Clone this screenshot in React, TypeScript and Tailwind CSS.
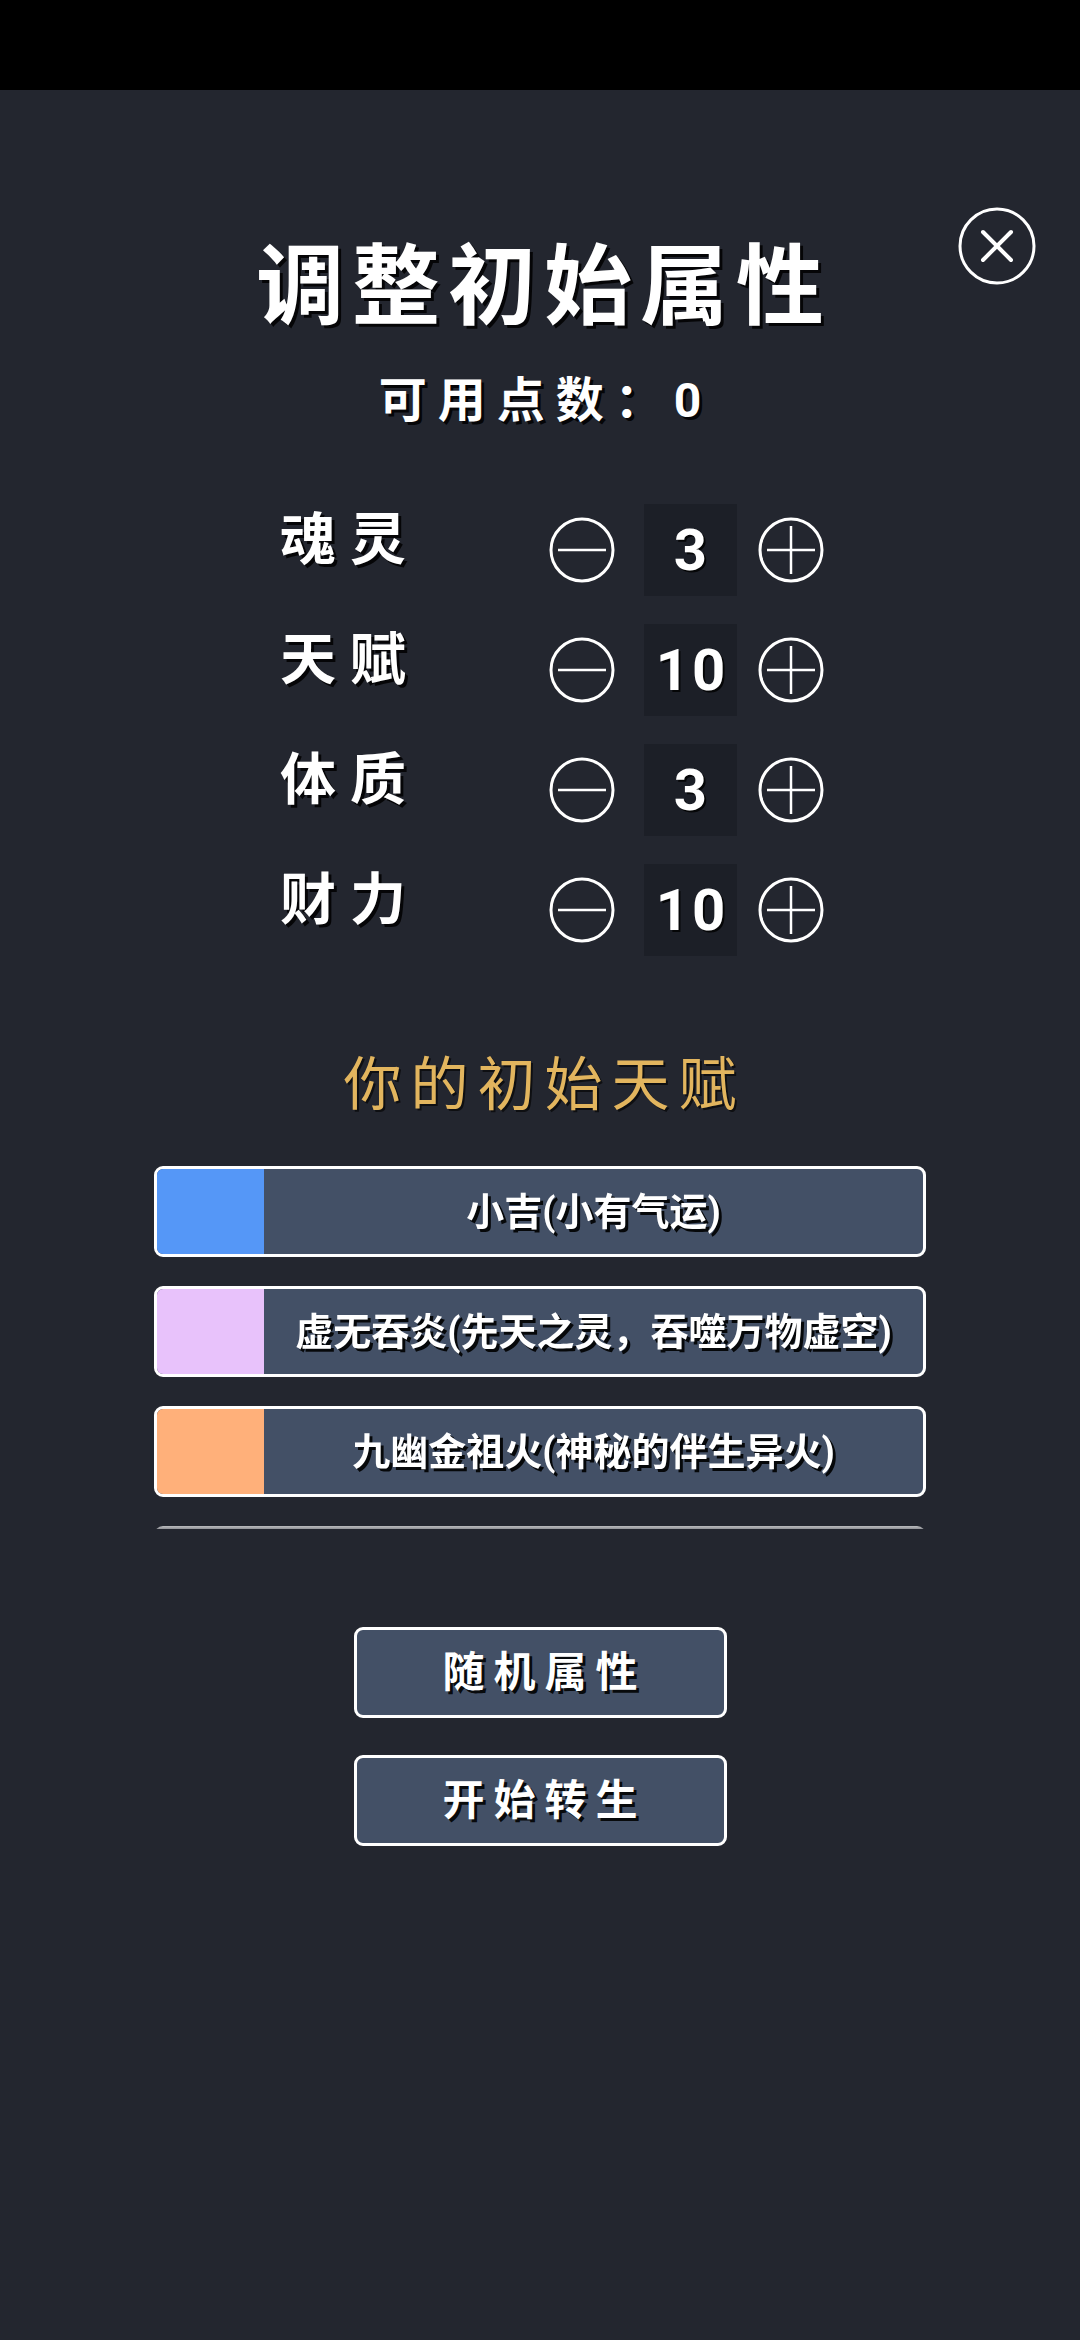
import React from "react";

const FONT = 'Roboto, "Noto Sans CJK SC", "Noto Sans", sans-serif';

function MinusIcon() {
  return (
    <svg width="66" height="66" viewBox="0 0 66 66" fill="none">
      <circle cx="33" cy="33" r="31" stroke="white" strokeWidth="3" />
      <line x1="9" y1="33" x2="57" y2="33" stroke="white" strokeWidth="2.5" />
    </svg>
  );
}

function PlusIcon() {
  return (
    <svg width="66" height="66" viewBox="0 0 66 66" fill="none">
      <circle cx="33" cy="33" r="31" stroke="white" strokeWidth="3" />
      <line x1="9" y1="33" x2="57" y2="33" stroke="white" strokeWidth="2.5" />
      <line x1="33" y1="9" x2="33" y2="57" stroke="white" strokeWidth="2.5" />
    </svg>
  );
}

const attrs = [
  { name: "魂灵", value: 3 },
  { name: "天赋", value: 10 },
  { name: "体质", value: 3 },
  { name: "财力", value: 10 },
];

const talents = [
  { color: "#5597f7", text: "小吉(小有气运)" },
  { color: "#e8c2fb", text: "虚无吞炎(先天之灵，吞噬万物虚空)" },
  { color: "#ffb07a", text: "九幽金祖火(神秘的伴生异火)" },
  { color: "#c9c9d9", text: "" },
];

export default function App() {
  return (
    <div
      className="w-[1080px] h-[2340px] bg-[#23262f] flex flex-col overflow-hidden"
      style={{ fontFamily: FONT }}
    >
      <div className="h-[90px] bg-black shrink-0" />
      <div className="relative flex flex-col items-center">
        <button className="absolute left-[958px] top-[117px] w-[78px] h-[78px]">
          <svg width="78" height="78" viewBox="0 0 78 78" fill="none">
            <circle cx="39" cy="39" r="37" stroke="white" strokeWidth="3" />
            <line x1="25" y1="25" x2="53" y2="53" stroke="white" strokeWidth="4" strokeLinecap="round" />
            <line x1="53" y1="25" x2="25" y2="53" stroke="white" strokeWidth="4" strokeLinecap="round" />
          </svg>
        </button>

        <h1 className="mt-[153px] text-[88px] leading-[88px] font-bold text-white tracking-[8px] pl-[8px] [text-shadow:3px_3px_0_rgba(0,0,0,0.85)]">
          调整初始属性
        </h1>
        <div className="mt-[46px] text-[48px] leading-[48px] font-bold text-white tracking-[11px] pl-[11px] [text-shadow:3px_3px_0_rgba(0,0,0,0.85)]">
          可用点数：0
        </div>

        <div className="mt-[79px] self-start ml-[280px] flex flex-col gap-[28px]">
          {attrs.map((a) => (
            <div key={a.name} className="flex items-center h-[92px]">
              <div className="w-[269px] text-[56px] leading-[56px] font-bold text-white tracking-[14px] mb-[20px] [text-shadow:3px_3px_0_rgba(0,0,0,0.85)]">
                {a.name}
              </div>
              <MinusIcon />
              <div className="ml-[29px] w-[93px] h-[92px] bg-[#1c1f27] flex items-center justify-center text-[58px] leading-none font-bold text-white tracking-[3px] pl-[3px] [text-shadow:2px_2px_0_rgba(0,0,0,0.8)]">
                {a.value}
              </div>
              <div className="ml-[21px]">
                <PlusIcon />
              </div>
            </div>
          ))}
        </div>

        <div className="mt-[100px] text-[58px] leading-[58px] text-[#e2b55e] tracking-[9px] pl-[9px] [text-shadow:2px_2px_0_rgba(0,0,0,0.6)]">
          你的初始天赋
        </div>

        <div className="mt-[52px] w-[772px] h-[363px] overflow-hidden flex flex-col gap-[29px] [mask-image:linear-gradient(to_bottom,#000_355px,rgba(0,0,0,0.5))]">
          {talents.map((t, i) => (
            <div
              key={i}
              className="shrink-0 h-[91px] flex border-[3px] border-white rounded-[9px] overflow-hidden bg-[#435066]"
            >
              <div className="w-[107px] h-full" style={{ backgroundColor: t.color }} />
              <div className="flex-1 flex items-center justify-center text-[38px] leading-none font-bold text-white [text-shadow:3px_3px_0_rgba(0,0,0,0.9)]">
                {t.text}
              </div>
            </div>
          ))}
        </div>

        <div className="mt-[98px] flex flex-col gap-[37px]">
          {["随机属性", "开始转生"].map((label) => (
            <button
              key={label}
              className="w-[373px] h-[91px] bg-[#435066] border-[3px] border-white rounded-[9px] flex items-center justify-center text-[42px] leading-none font-bold text-white tracking-[9px] pl-[9px] [text-shadow:3px_3px_0_rgba(0,0,0,0.9)]"
              style={{ fontFamily: FONT }}
            >
              {label}
            </button>
          ))}
        </div>
      </div>
    </div>
  );
}
